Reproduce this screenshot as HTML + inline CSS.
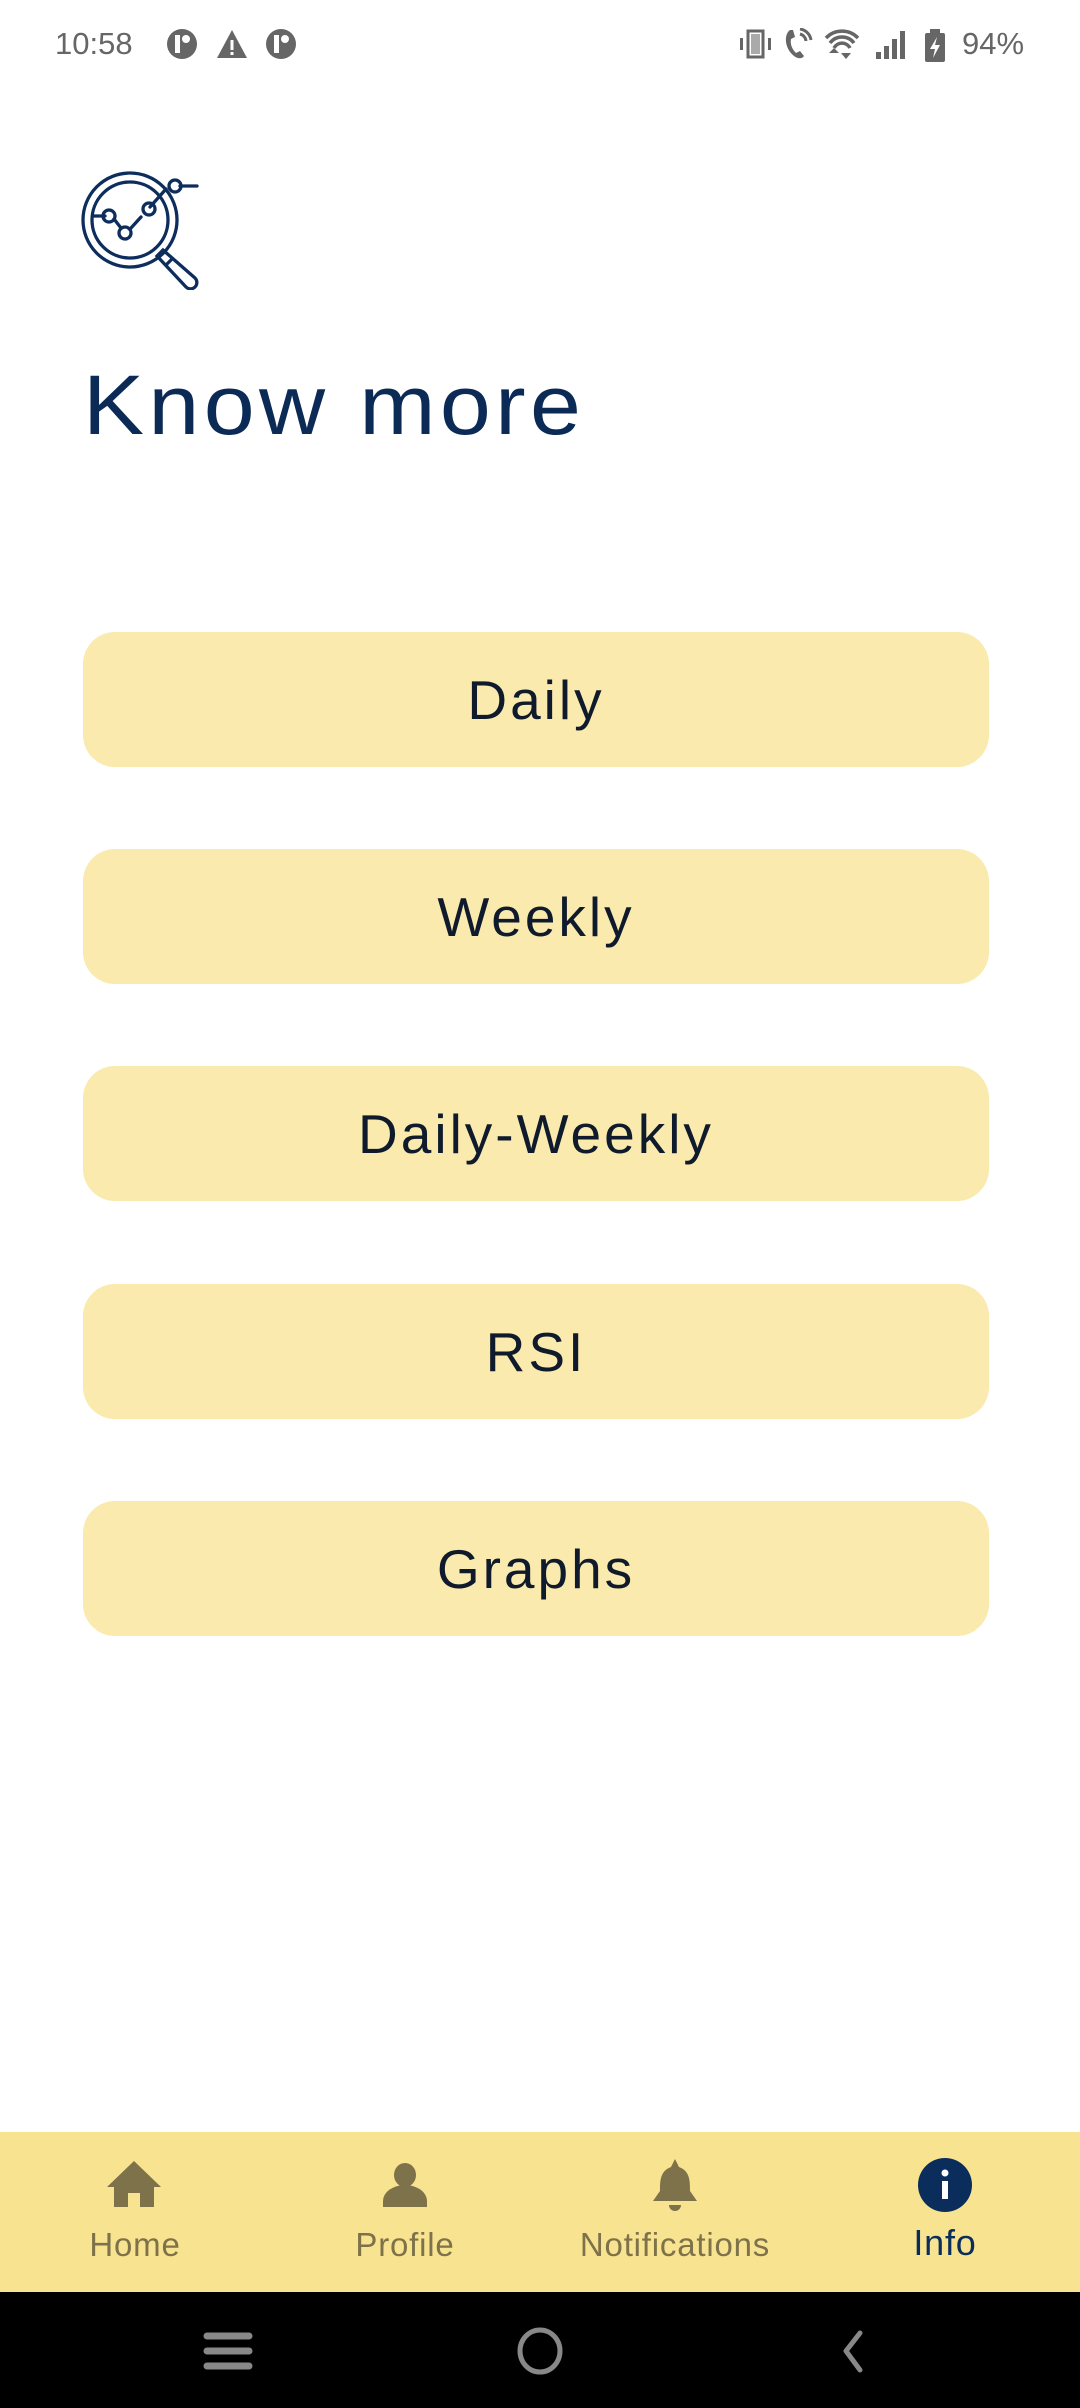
<!DOCTYPE html>
<html><head><meta charset="utf-8"><style>
*{margin:0;padding:0;box-sizing:border-box}
html,body{width:1080px;height:2408px;background:#fff;overflow:hidden;font-family:"Liberation Sans",sans-serif;position:relative}
.abs{position:absolute}
.btn{position:absolute;left:83px;width:906px;height:135px;background:#faeaae;border-radius:32px;display:flex;align-items:center;justify-content:center;font-size:55px;color:#0f1a2c;letter-spacing:3px}
.nav{position:absolute;top:2132px;left:0;width:1080px;height:160px;background:#f8e391}
.lbl{position:absolute;top:2226px;font-size:33px;color:#7d7249;transform:translateX(-50%);white-space:nowrap;letter-spacing:0.8px}
</style></head><body>
<!-- status bar -->
<div class="abs" style="left:55px;top:26px;font-size:31px;color:#666">10:58</div>
<svg class="abs" style="left:165px;top:27px" width="140" height="34" viewBox="0 0 140 34">
<circle cx="17" cy="17" r="15" fill="#666"/><rect x="10" y="8" width="5" height="18" fill="#fff"/><circle cx="21" cy="12" r="4" fill="#fff"/>
<path d="M67 3 L82 31 L52 31 Z" fill="#666"/><rect x="65.5" y="13" width="3" height="10" fill="#fff"/><rect x="65.5" y="25" width="3" height="3" fill="#fff"/>
<circle cx="116" cy="17" r="15" fill="#666"/><rect x="109" y="8" width="5" height="18" fill="#fff"/><circle cx="120" cy="12" r="4" fill="#fff"/>
</svg>
<svg class="abs" style="left:738px;top:28px" width="220" height="34" viewBox="0 0 220 34">
<rect x="10" y="3" width="15" height="26" fill="none" stroke="#666" stroke-width="3"/><rect x="13" y="6" width="9" height="20" fill="#aaa"/>
<rect x="2" y="10" width="3" height="12" fill="#666"/><rect x="30" y="10" width="3" height="12" fill="#666"/>
<path d="M52 2 C46 6 46 20 56 28 C60 31 64 31 66 28 L62 23 L58 25 C54 21 52 16 53 11 L57 9 L55 2 Z" fill="#666"/>
<path d="M62 6 A8 8 0 0 1 68 13 M62 1 A13 13 0 0 1 73 12" fill="none" stroke="#666" stroke-width="3"/>
<path d="M88 10 A22 22 0 0 1 120 10 M92 15 A15 15 0 0 1 116 15 M96 20 A9 9 0 0 1 112 20" fill="none" stroke="#666" stroke-width="3.5"/>
<path d="M91 25 L96 20 L101 25 Z M103 25 L113 25 L108 31 Z" fill="#666"/>
<rect x="138" y="24" width="5" height="7" fill="#666"/><rect x="146" y="18" width="5" height="13" fill="#666"/><rect x="154" y="11" width="5" height="20" fill="#666"/><rect x="162" y="3" width="5" height="28" fill="#666"/>
<rect x="187" y="5" width="20" height="29" rx="2" fill="#666"/><rect x="192" y="1" width="10" height="5" fill="#666"/>
<path d="M199 9 L192 21 L197 21 L195 30 L202 17 L197 17 Z" fill="#fff"/>
</svg>
<div class="abs" style="left:962px;top:26px;font-size:31px;color:#666">94%</div>

<!-- logo -->
<svg class="abs" style="left:80px;top:170px" width="120" height="120" viewBox="80 170 120 120" fill="none" stroke="#0d2e5c" stroke-width="3.3" stroke-linecap="round">
<circle cx="130" cy="220" r="47"/>
<circle cx="130" cy="220" r="38"/>
<path d="M94 216 L105 216 M114 219 L121 228 M131 228 L141 217 M150 207 L166 189 M180 186 L197 186"/>
<circle cx="109" cy="216" r="6"/>
<circle cx="125" cy="233" r="6"/>
<circle cx="149" cy="209" r="6" />
<circle cx="175" cy="186" r="6"/>
<path d="M157 256 L163 250 L195 278 A6 6 0 0 1 186 287 Z"/>
<path d="M166 265 L172 259"/>
</svg>

<div class="abs" style="left:83px;top:357px;font-size:84px;color:#0b2a55;letter-spacing:4px;transform:scaleX(1.09);transform-origin:left top;white-space:nowrap">Know more</div>

<div class="btn" style="top:632px">Daily</div>
<div class="btn" style="top:849px">Weekly</div>
<div class="btn" style="top:1066px">Daily-Weekly</div>
<div class="btn" style="top:1284px">RSI</div>
<div class="btn" style="top:1501px">Graphs</div>

<div class="nav"></div>
<svg class="abs" style="left:0;top:2155px" width="1080" height="62">
<path d="M134 6 L161 32 L154 32 L154 52 L140 52 L140 38 L128 38 L128 52 L114 52 L114 32 L107 32 Z" fill="#7d7249"/>
<ellipse cx="405" cy="20" rx="11" ry="12" fill="#7d7249"/>
<path d="M383 52 L383 46 A22 16 0 0 1 427 46 L427 52 Z" fill="#7d7249"/>
<path d="M675 4 L679 12 C690 16 690 26 690 36 L697 46 L653 46 L660 36 C660 26 660 16 671 12 Z" fill="#7d7249"/>
<path d="M669 50 L681 50 A6 6 0 0 1 669 50 Z" fill="#7d7249"/>
<ellipse cx="945" cy="30" rx="27" ry="27" fill="#0b2d5b"/>
<rect x="942" y="26" width="6" height="18" fill="#fff"/><circle cx="945" cy="18" r="3.5" fill="#fff"/>
</svg>
<div class="lbl" style="left:135px">Home</div>
<div class="lbl" style="left:405px">Profile</div>
<div class="lbl" style="left:675px">Notifications</div>
<div class="lbl" style="left:945px;font-size:36px;color:#0b2d5b;top:2222px">Info</div>

<div class="abs" style="left:0;top:2292px;width:1080px;height:116px;background:#000"></div>
<svg class="abs" style="left:0;top:2310px" width="1080" height="80">
<g stroke="#888" stroke-width="7" stroke-linecap="round">
<path d="M207 26 L249 26 M207 41 L249 41 M207 56 L249 56"/>
</g>
<ellipse cx="540" cy="41" rx="20" ry="21" fill="none" stroke="#888" stroke-width="5"/>
<path d="M860 23 L846 41 L860 60" fill="none" stroke="#888" stroke-width="5" stroke-linecap="round" stroke-linejoin="round"/>
</svg>
</body></html>
